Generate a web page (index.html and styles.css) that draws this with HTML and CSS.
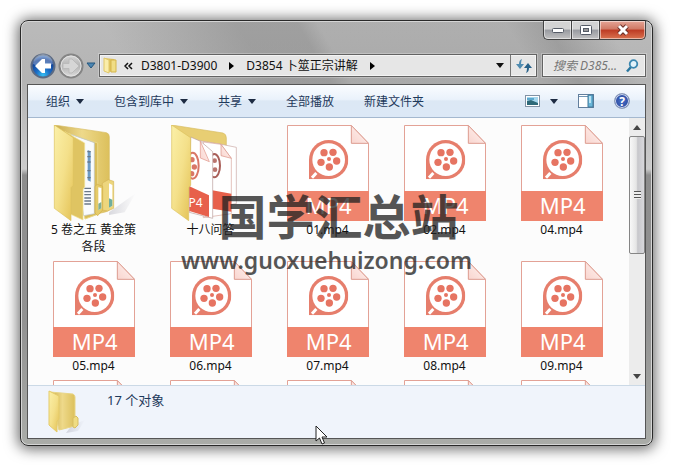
FILE: index.html
```html
<!DOCTYPE html>
<html lang="zh-CN">
<head>
<meta charset="utf-8">
<title>D3854 卜筮正宗讲解</title>
<link rel="stylesheet" href="styles.css">
</head>
<body>
<svg class="defs" aria-hidden="true">
  <defs>
    <linearGradient id="flap" x1="0" y1="0" x2="1" y2="1"><stop offset="0" stop-color="#fbf0a8"/><stop offset=".5" stop-color="#f4e08a"/><stop offset="1" stop-color="#e3c154"/></linearGradient>
    <linearGradient id="back" x1="0" y1="0" x2="1" y2="0"><stop offset="0" stop-color="#c9ab4c"/><stop offset=".5" stop-color="#eed98a"/><stop offset="1" stop-color="#dcc05c"/></linearGradient>
    <linearGradient id="fold" x1="0" y1="1" x2="1" y2="0"><stop offset="0" stop-color="#f9d5cf"/><stop offset="1" stop-color="#fff5f2"/></linearGradient>
    <linearGradient id="shade" x1="0" y1="0" x2="1" y2="0"><stop offset="0" stop-color="#889" stop-opacity=".3"/><stop offset="1" stop-color="#889" stop-opacity="0"/></linearGradient>
    <radialGradient id="blue" cx=".5" cy=".9" r=".9"><stop offset="0" stop-color="#35c0f4"/><stop offset=".35" stop-color="#1c6cc4"/><stop offset=".75" stop-color="#123f94"/><stop offset="1" stop-color="#6d9bd6"/></radialGradient>
    <linearGradient id="silver" x1="0" y1="0" x2="0" y2="1"><stop offset="0" stop-color="#d8d8d8"/><stop offset=".5" stop-color="#b4b4b4"/><stop offset="1" stop-color="#dedede"/></linearGradient>
    <symbol id="reel" viewBox="0 0 118 118">
      <path fill="#e67e6c" d="M0 118V59A59 59 0 1 1 59 118Z"/>
      <circle cx="59" cy="59" r="49" fill="#fff"/>
      <g fill="#e67462"><circle cx="45" cy="38" r="11"/><circle cx="72" cy="37" r="11"/><circle cx="83" cy="63" r="11"/><circle cx="61" cy="81" r="11"/><circle cx="36" cy="67" r="11"/><circle cx="60" cy="57" r="6"/></g>
      <path d="M9 113L22 99" stroke="#fff" stroke-width="9"/>
    </symbol>
    <symbol id="mp4" viewBox="0 0 246 288">
      <path d="M1.500 287V1.500H193L244.500 55V287Z" fill="#fff" stroke="#e3a296" stroke-width="3"/>
      <path d="M193 1.500V55H244.500Z" fill="url(#fold)" stroke="#dc9c90" stroke-width="3"/>
      <use href="#reel" x="66" y="45" width="118" height="118"/>
      <path d="M0 198H246V288H0Z" fill="#ef846d"/>
      <text x="125" y="267" text-anchor="middle" class="badge">MP4</text>
    </symbol>
    <symbol id="folder-docs" viewBox="0 0 246 288">
      <path d="M168 262L248 205L215 262L168 270Z" fill="url(#shade)"/>
      <path d="M4 0L160 23Q169 25 169 36V250Q169 258 160 260L120 270Z" fill="url(#back)" stroke="#d8bd62" stroke-width="2"/>
      <path d="M148 174L166 164L182 169V250L164 258L148 255Z" fill="#edd67d" stroke="#d5b557" stroke-width="2"/>
      <path d="M168 175L178 180V242L168 248Z" fill="#fff"/><path d="M168 220L178 224V242L168 248Z" fill="#70ae9e"/>
      <path d="M48 26L134 54V268L96 282Z" fill="#d9bd58" stroke="#ead887" stroke-width="3"/>
      <path d="M56 29L124 53V266L92 272Z" fill="#f9fbfc" stroke="#bcc4cc" stroke-width="2"/>
      <path d="M104 75L113 79V170L104 166Z" fill="#6c9bc5"/>
      <path d="M103 80H113M103 95H113M103 111H113M103 137H113M103 158H113M94 190H114M94 200H114M94 209H114M94 219H114M94 228H114M94 237H114" stroke="#6b7988" stroke-width="4"/>
      <path d="M126 184L133 178L149 184V255L134 272L126 264Z" fill="#e5cb69" stroke="#d0ad49" stroke-width="2"/>
      <path d="M136 187L145 189V250L136 256Z" fill="#fff"/><path d="M136 236L145 231V250L136 256Z" fill="#83af92"/>
      <path d="M36 20L95 54V185L90 194V285L45 264Z" fill="#dfc462" stroke="#f2e392" stroke-width="2"/>
      <path d="M4 0L61 38V181L54 188V287L4 250Z" fill="url(#flap)" stroke="#ddc15d" stroke-width="2"/>
    </symbol>
    <symbol id="folder-video" viewBox="0 0 246 288">
      <path d="M5 0L159 24Q169 27 169 39V215L58 250Z" fill="#e8ce73" stroke="#d8bd62" stroke-width="2"/>
      <path d="M62 43L150 57L199 67V236L80 252Z" fill="#fff" stroke="#c8a6a2" stroke-width="2"/>
      <path d="M153 58L184 100V266L100 278V51Z" fill="#fff" stroke="#d7a49c" stroke-width="2"/>
      <path d="M153 58V92L184 100Z" fill="url(#fold)" stroke="#d99084" stroke-width="2"/>
      <path d="M127 196L184 206V260L127 251Z" fill="#e7604b"/>
      <ellipse cx="133" cy="122" rx="17" ry="35" fill="#fff" stroke="#a95f59" stroke-width="6"/><circle cx="134" cy="107" r="7" fill="#ba746d"/><circle cx="135" cy="134" r="7" fill="#ba746d"/>
      <path d="M62 36L92 49L128 80V280L58 262Z" fill="#fff" stroke="#b99d9a" stroke-width="2"/>
      <path d="M91 49V99L118 110Z" fill="url(#fold)" stroke="#df9386" stroke-width="2"/>
      <ellipse cx="68" cy="122" rx="18" ry="39" fill="#fff" stroke="#d97767" stroke-width="6"/><circle cx="66" cy="104" r="8" fill="#d97767"/><circle cx="73" cy="126" r="8" fill="#d97767"/><circle cx="65" cy="146" r="8" fill="#d97767"/>
      <path d="M58 184L117 211V276L58 258Z" fill="#e7604b"/>
      <text x="77" y="246" text-anchor="middle" class="badge-small">P4</text>
      <path d="M5 0L62 38V181L56 188V287L5 250Z" fill="url(#flap)" stroke="#ddc15d" stroke-width="2"/>
    </symbol>
    <symbol id="folder-plain" viewBox="0 0 38 44">
      <path d="M24 35L37 30L30 41L18 43Z" fill="url(#shade)"/>
      <path d="M2 2L25 4Q27 5 27 7V36L11 40Z" fill="url(#back)" stroke="#e8d587"/>
      <path d="M25 28L28 26L30 28V35L27 38L25 37Z" fill="#efdc82" stroke="#d7bd62"/>
      <path d="M1 1L11 6V29L9 31V42L1 35Z" fill="url(#flap)" stroke="#e5cb69"/>
    </symbol>
  </defs>
</svg>

<main class="window">
  <header class="titlebar">
    <div class="controls">
      <button type="button" class="control" aria-label="最小化"><svg width="14" height="8" viewBox="0 0 14 8"><rect x="1.500" y="2.500" width="11" height="4" rx="1" fill="#fff" stroke="#555b66"/></svg></button>
      <button type="button" class="control" aria-label="最大化"><svg width="14" height="12" viewBox="0 0 14 12"><rect x="1.500" y="1.500" width="11" height="9" rx="1" fill="#fff" stroke="#555b66"/><rect x="4.500" y="4.500" width="5" height="3" fill="#999" stroke="#555b66"/></svg></button>
      <button type="button" class="control close" aria-label="关闭"><svg width="14" height="12" viewBox="0 0 14 12"><path d="M3 2L11 10M11 2L3 10" stroke="#6c3028" stroke-width="5"/><path d="M3 2L11 10M11 2L3 10" stroke="#fff" stroke-width="3"/></svg></button>
    </div>
  </header>

  <nav class="navigation" aria-label="地址栏">
    <div class="travel">
      <button type="button" aria-label="后退"><svg width="26" height="26" viewBox="0 0 26 26"><circle cx="13" cy="13" r="11.500" fill="url(#blue)" stroke="#5a6a84" stroke-width="2"/><path d="M3 11A10 10 0 0 1 23 11Q13 16 3 11Z" fill="#fff" opacity=".3"/><path d="M5 13L12 6H15V10.500H21V15.500H15V20H12Z" fill="#fff"/></svg></button>
      <button type="button" aria-label="前进"><svg width="26" height="26" viewBox="0 0 26 26"><circle cx="13" cy="13" r="11.500" fill="url(#silver)" stroke="#858585" stroke-width="2"/><circle cx="13" cy="13" r="10" fill="none" stroke="#e2e2e2"/><path d="M21 13L14 6H11V10.500H5V15.500H11V20H14Z" fill="#d6d6d6" stroke="#bbb"/></svg></button>
      <button type="button" aria-label="最近浏览的位置"><svg width="10" height="7" viewBox="0 0 10 7"><path d="M1 1H9L5 6Z" fill="#4b86b3" stroke="#25567e"/></svg></button>
    </div>
    <div class="address">
      <svg class="address-icon" width="14" height="17" viewBox="0 0 14 17"><path d="M1 1L11 2L13 4V14L5 15Z" fill="#dfc15a"/><path d="M8 3H13V15H8Z" fill="#f0dd86" stroke="#d5b64f"/><path d="M1 1L6 3V16L1 14Z" fill="#faedaa" stroke="#e1c768"/></svg>
      <button type="button" class="overflow" aria-label="上级文件夹"><svg width="9" height="8" viewBox="0 0 9 8"><path d="M4 1L1 4L4 7M8 1L5 4L8 7" fill="none" stroke="#111" stroke-width="1.500"/></svg></button>
      <a href="#">D3801-D3900</a>
      <svg class="crumb-arrow" width="5" height="8" viewBox="0 0 5 8"><path d="M0 0L5 4L0 8Z"/></svg>
      <a href="#">D3854 卜筮正宗讲解</a>
      <svg class="crumb-arrow" width="5" height="8" viewBox="0 0 5 8"><path d="M0 0L5 4L0 8Z"/></svg>
      <button type="button" class="history" aria-label="历史记录"><svg width="8" height="5" viewBox="0 0 8 5"><path d="M0 0H8L4 5Z" fill="#111"/></svg></button>
      <button type="button" class="refresh" aria-label="刷新"><svg width="16" height="14" viewBox="0 0 16 14"><path d="M6 0Q3 1 3 5H0L4 10L8 5H5Q5 2 6 0Z" fill="#4f8bb0"/><path d="M10 14Q13 13 13 9H16L12 4L8 9H11Q11 12 10 14Z" fill="#28628a"/></svg></button>
    </div>
    <label class="search">
      <input type="text" aria-label="搜索" placeholder="搜索 D385...">
      <svg width="14" height="14" viewBox="0 0 14 14"><path d="M6 8L2 12.500" stroke="#2b78a0" stroke-width="2.500"/><circle cx="8.500" cy="5" r="3.800" fill="#e2f2fa" stroke="#3b87b0" stroke-width="1.800"/></svg>
    </label>
  </nav>

  <section class="content">
    <div class="toolbar">
      <button type="button">组织<span class="caret"></span></button>
      <button type="button">包含到库中<span class="caret"></span></button>
      <button type="button">共享<span class="caret"></span></button>
      <button type="button">全部播放</button>
      <button type="button">新建文件夹</button>
      <div class="tools">
        <button type="button" class="view" aria-label="更改视图"><svg width="15" height="12" viewBox="0 0 15 12"><rect x=".5" y=".5" width="14" height="11" fill="#fff" stroke="#8192a5"/><path d="M2 2H13V10H2Z" fill="#a6d7ee"/><path d="M2 6L6 5L13 8V10H2Z" fill="#2d6978"/><path d="M2 3H9V5H2Z" fill="#5ca8cd"/></svg><span class="caret"></span></button>
        <button type="button" aria-label="显示预览窗格"><svg width="16" height="14" viewBox="0 0 16 14"><rect x=".5" y=".5" width="15" height="13" fill="#fff" stroke="#627f9d"/><path d="M1 2.500H10" stroke="#7296b5"/><path d="M10 1H15V13H10Z" fill="#69b6d8" stroke="#43789a"/><path d="M11 2H13V9H11Z" fill="#b9e2f3"/></svg></button>
        <button type="button" class="help" aria-label="帮助">?</button>
      </div>
    </div>

    <div class="files">
      <ul class="grid">
        <li><svg><use href="#folder-docs"/></svg><span>5 卷之五 黄金策各段</span></li>
        <li><svg><use href="#folder-video"/></svg><span>十八问答</span></li>
        <li><svg><use href="#mp4"/></svg><span>01.mp4</span></li>
        <li><svg><use href="#mp4"/></svg><span>02.mp4</span></li>
        <li><svg><use href="#mp4"/></svg><span>04.mp4</span></li>
        <li><svg><use href="#mp4"/></svg><span>05.mp4</span></li>
        <li><svg><use href="#mp4"/></svg><span>06.mp4</span></li>
        <li><svg><use href="#mp4"/></svg><span>07.mp4</span></li>
        <li><svg><use href="#mp4"/></svg><span>08.mp4</span></li>
        <li><svg><use href="#mp4"/></svg><span>09.mp4</span></li>
        <li><svg><use href="#mp4"/></svg></li>
        <li><svg><use href="#mp4"/></svg></li>
        <li><svg><use href="#mp4"/></svg></li>
        <li><svg><use href="#mp4"/></svg></li>
        <li><svg><use href="#mp4"/></svg></li>
      </ul>
      <div class="scrollbar">
        <button type="button" aria-label="向上滚动"><svg width="8" height="5" viewBox="0 0 8 5"><path d="M0 5L4 0L8 5Z" fill="#444"/></svg></button>
        <div class="track"><div class="thumb"><i></i></div></div>
        <button type="button" aria-label="向下滚动"><svg width="8" height="5" viewBox="0 0 8 5"><path d="M0 0H8L4 5Z" fill="#444"/></svg></button>
      </div>
    </div>

    <footer class="details">
      <svg width="38" height="44"><use href="#folder-plain"/></svg>
      <span>17 个对象</span>
    </footer>
  </section>
</main>

<div class="watermark"><strong>国学汇总站</strong><span>www.guoxuehuizong.com</span></div>
<svg class="pointer" width="13" height="20" viewBox="0 0 13 20"><path d="M1 1V16L4.500 13L7 19L9.500 18L7 12H12Z" fill="#fff" stroke="#222"/></svg>
</body>
</html>
```
FILE: styles.css
```css
* { box-sizing: border-box; }

body {
  margin: 0;
  padding: 20px;
  background: #fff;
  font: 12px/17px "Noto Sans", "Noto Sans CJK SC", sans-serif;
  color: #111;
  overflow: hidden;
}

.defs { position: absolute; width: 0; height: 0; }
svg { display: block; flex: none; }
button { margin: 0; padding: 0; border: 0; background: none; font: inherit; color: inherit; display: flex; align-items: center; justify-content: center; }
a { color: inherit; text-decoration: none; white-space: nowrap; }

.window {
  display: flex;
  flex-direction: column;
  height: calc(100vh - 40px);
  padding: 0 6px 6px;
  border: 1px solid #292929;
  border-radius: 8px;
  background:
    linear-gradient(60deg, transparent 0 18%, rgba(110,110,110,.35) 38% 47%, rgba(110,110,110,.15) 50% 78%, rgba(110,110,110,.35) 84%, transparent 93%) 0 0 / 100% 70px no-repeat,
    linear-gradient(#bababa 0, #b4b4b4 60px, #cbcbcb 148px, #8d8d8d 154px, #929292 300px, #aaaca8);
  box-shadow: inset 0 0 0 1px #d5d5d5, 0 1px 14px 2px rgba(0,0,0,.6);
}

.titlebar { height: 33px; flex: none; }
.controls { display: flex; justify-content: flex-end; }
.control {
  width: 28px;
  height: 19px;
  border: solid #444;
  border-width: 0 0 1px 1px;
  background: linear-gradient(#d3d3d3 0 45%, #989aa0 50%, #c2c2c2);
  box-shadow: inset 0 0 0 1px rgba(255,255,255,.5);
}
.control:first-child { border-bottom-left-radius: 5px; }
.close {
  width: 47px;
  border-right-width: 1px;
  border-bottom-right-radius: 5px;
  background: linear-gradient(#e5a596 0, #d07965 45%, #bd3b24 50%, #da7350);
}

.navigation { display: flex; align-items: center; gap: 5px; height: 23px; margin-bottom: 7px; flex: none; }
.travel { display: flex; align-items: center; gap: 2px; padding-left: 3px; margin-right: -2px; }
.address, .search {
  display: flex;
  align-items: center;
  height: 23px;
  border: 1px solid #636363;
  background: #e6e6e6;
  box-shadow: inset 0 0 0 1px #f4f4f4, 0 0 0 1px rgba(255,255,255,.25);
}
.address { flex: 1; min-width: 0; gap: 12px; padding-left: 3px; }
.address-icon { margin-right: -5px; }
.overflow { margin-right: -4px; }
.history { width: 20px; height: 100%; margin-left: auto; }
.refresh { width: 26px; height: 100%; margin-left: -12px; border-left: 1px solid #777; }
.search { width: 104px; padding: 0 6px 0 10px; }
.search input { flex: 1; min-width: 0; padding: 0; border: 0; background: none; font: inherit; font-style: italic; }
.search input::placeholder { color: #777; opacity: 1; }

.content { display: flex; flex-direction: column; flex: 1; min-height: 0; border: 1px solid #555; background: #fcfcfc; }

.toolbar {
  display: flex;
  align-items: center;
  gap: 30px;
  height: 33px;
  flex: none;
  padding: 0 15px 0 18px;
  border-bottom: 1px solid #a4b8cf;
  background: linear-gradient(#fafcff 0, #eaf2fb 45%, #dce8f5 50%, #dce8f6);
  color: #1e395b;
  white-space: nowrap;
}
.toolbar button { gap: 6px; }
.caret { border: solid transparent; border-width: 5px 4px 0; border-top-color: #1d2b42; }
.tools { display: flex; align-items: center; gap: 20px; margin-left: auto; }
.toolbar .view { gap: 10px; }
.help {
  width: 16px;
  height: 16px;
  border: 1px solid #8c9bb8;
  border-radius: 50%;
  background: radial-gradient(#4871c8, #203b91);
  box-shadow: inset 0 0 0 1px #cfd9ee;
}
.toolbar .help { color: #fff; font-weight: 700; }

.files { display: flex; flex: 1; min-height: 0; }
.grid {
  flex: 1;
  display: grid;
  grid-template-columns: repeat(auto-fill, 117px);
  align-content: start;
  row-gap: 6px;
  margin: 0;
  padding: 7px 8px 0 7px;
  list-style: none;
  overflow: hidden;
}
.grid li { display: flex; flex-direction: column; align-items: center; text-align: center; }
.grid svg { width: 82px; height: 96px; }
.grid span { max-width: 96px; }
.badge { font: 66px "Noto Sans", sans-serif; fill: #fff; }
.badge-small { font: 36px "Noto Sans", sans-serif; fill: #fff; }

.scrollbar { display: flex; flex-direction: column; width: 16px; background: #ececec; }
.scrollbar button { height: 18px; flex: none; }
.track { flex: 1; }
.thumb {
  display: flex;
  align-items: center;
  justify-content: center;
  height: 51%;
  border: 1px solid #858585;
  border-radius: 2px;
  background: linear-gradient(90deg, #f8f8f8, #e5e5e5 45%, #c7c7cb 55%, #d8d8dc);
}
.thumb i { width: 7px; height: 8px; background: repeating-linear-gradient(#555 0 1px, #eee 1px 3px); }

.details {
  display: flex;
  gap: 21px;
  height: 53px;
  flex: none;
  padding: 4px 20px;
  border-top: 1px solid #cbd9e6;
  background: #f0f4fb;
  color: #1e395b;
  font-size: 13px;
  line-height: 20px;
}

.watermark {
  position: absolute;
  top: 188px;
  left: 0;
  right: 0;
  display: flex;
  flex-direction: column;
  align-items: center;
  padding-right: 20px;
  color: #222;
  opacity: .76;
  pointer-events: none;
}
.watermark strong { padding-left: 24px; font: 700 48px/52px "Noto Sans CJK SC", sans-serif; }
.watermark span { font: 600 23px/40px "Noto Sans", sans-serif; }
.pointer { position: absolute; left: 315px; top: 425px; }
```
